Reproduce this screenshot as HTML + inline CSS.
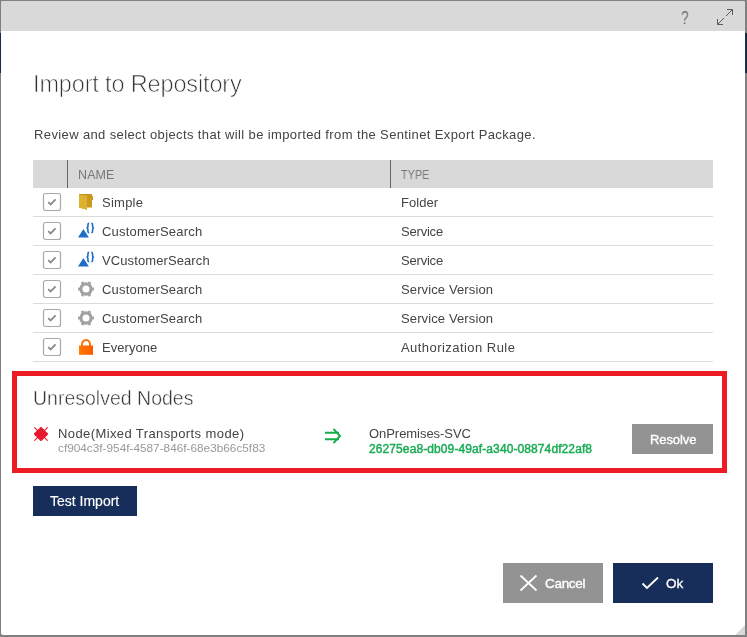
<!DOCTYPE html>
<html><head><meta charset="utf-8">
<style>
html,body{margin:0;padding:0;}
body{width:747px;height:637px;background:#808080;position:relative;overflow:hidden;font-family:"Liberation Sans",sans-serif;color:#444;}
.abs{position:absolute;}
#dlg{position:absolute;left:1px;top:1px;width:744px;height:634px;background:#fff;border-radius:2px;overflow:hidden;}
#hdr{position:absolute;left:0;top:0;width:744px;height:30px;background:#d9d9d9;}
.t{position:absolute;white-space:nowrap;line-height:1;will-change:transform;}
.btn{position:absolute;}
</style></head><body>
<div class="abs" style="left:0;top:33px;width:1px;height:40px;background:#1b2a44"></div>
<div class="abs" style="left:745px;top:33px;width:2px;height:40px;background:#1b2a44"></div>
<div id="dlg">
  <div id="hdr"></div>
</div>
<!-- header icons -->
<div class="t" style="left:681px;top:9.6px;font-size:17.5px;color:#707070;transform:scaleX(0.8);transform-origin:0 0">?</div>
<svg class="abs" style="left:715px;top:7px" width="20" height="20" viewBox="0 0 20 20">
  <g stroke="#5c5c5c" stroke-width="1" fill="none">
    <path d="M2.5 17.5 L9 11 M11 9 L17.5 2.5"/>
    <path d="M12 2.5 H17.5 V8"/>
    <path d="M2.5 12 V17.5 H8"/>
  </g>
</svg>

<div class="t" style="left:33px;top:72.5px;font-size:23.5px;letter-spacing:-0.15px;color:#333;-webkit-text-stroke:0.7px #fff">Import to Repository</div>
<div class="t" style="left:34px;top:127.8px;font-size:13px;letter-spacing:0.38px;color:#444">Review and select objects that will be imported from the Sentinet Export Package.</div>

<!-- table header -->
<div class="abs" style="left:33px;top:160px;width:680px;height:28px;background:#d9d9d9"></div>
<div class="abs" style="left:67px;top:160px;width:1px;height:28px;background:#666"></div>
<div class="abs" style="left:390px;top:160px;width:1px;height:28px;background:#666"></div>
<div class="t" style="left:77.8px;top:169px;font-size:12.5px;letter-spacing:0.1px;color:#777">NAME</div>
<div class="t" style="left:401px;top:169px;font-size:12.5px;letter-spacing:0.1px;color:#777;transform:scaleX(0.86);transform-origin:0 0">TYPE</div>

<div class="abs" style="left:33px;top:216px;width:680px;height:1px;background:#dcdcdc"></div>
<svg class="abs" style="left:42px;top:192px" width="20" height="20" viewBox="0 0 20 20">
<rect x="1.5" y="1.5" width="17" height="17" rx="2" ry="2" fill="#fff" stroke="#a8a8a8" stroke-width="1.2"/>
<path d="M6.2 10.2 L8.6 12.5 L13.6 7.4" stroke="#8a8a8a" stroke-width="1.8" fill="none"/>
</svg>
<svg class="abs" style="left:78px;top:193px" width="16" height="17" viewBox="0 0 16 17">
<path d="M1 1 H14 V3 H15 V7 H14 V14.6 H9 V16.8 L1 14.6 Z" fill="#c99a1e"/>
<path d="M1 1.2 L9 3 V16.8 L1 14.6 Z" fill="#dcb22e"/>
<path d="M1 1 H14 V1.8 H1 Z" fill="#c08a14" opacity="0.6"/>
</svg>
<div class="t" style="left:102px;top:196px;font-size:13px;letter-spacing:0.25px">Simple</div>
<div class="t" style="left:401px;top:196px;font-size:13px;letter-spacing:0.05px">Folder</div>
<div class="abs" style="left:33px;top:245px;width:680px;height:1px;background:#dcdcdc"></div>
<svg class="abs" style="left:42px;top:221px" width="20" height="20" viewBox="0 0 20 20">
<rect x="1.5" y="1.5" width="17" height="17" rx="2" ry="2" fill="#fff" stroke="#a8a8a8" stroke-width="1.2"/>
<path d="M6.2 10.2 L8.6 12.5 L13.6 7.4" stroke="#8a8a8a" stroke-width="1.8" fill="none"/>
</svg>
<svg class="abs" style="left:77px;top:222px" width="18" height="17" viewBox="0 0 18 17">
<path d="M1 15.6 L6.4 7 L11.9 15.6 Z" fill="#1e6ec8"/>
<path d="M12.2 1.4 C11.2 1.4 10.9 1.9 10.9 2.8 V4.9 C10.9 5.6 10.5 6 9.4 6 C10.5 6 10.9 6.4 10.9 7.1 V9.3 C10.9 10.2 11.2 10.7 12.2 10.7" stroke="#1e6ec8" stroke-width="1.6" fill="none"/>
<path d="M14.3 1.4 C15.3 1.4 15.6 1.9 15.6 2.8 V4.9 C15.6 5.6 16 6 17.1 6 C16 6 15.6 6.4 15.6 7.1 V9.3 C15.6 10.2 15.3 10.7 14.3 10.7" stroke="#1e6ec8" stroke-width="1.6" fill="none"/>
</svg>
<div class="t" style="left:102px;top:225px;font-size:13px;letter-spacing:0.2px">CustomerSearch</div>
<div class="t" style="left:401px;top:225px;font-size:13px;letter-spacing:-0.2px">Service</div>
<div class="abs" style="left:33px;top:274px;width:680px;height:1px;background:#dcdcdc"></div>
<svg class="abs" style="left:42px;top:250px" width="20" height="20" viewBox="0 0 20 20">
<rect x="1.5" y="1.5" width="17" height="17" rx="2" ry="2" fill="#fff" stroke="#a8a8a8" stroke-width="1.2"/>
<path d="M6.2 10.2 L8.6 12.5 L13.6 7.4" stroke="#8a8a8a" stroke-width="1.8" fill="none"/>
</svg>
<svg class="abs" style="left:77px;top:251px" width="18" height="17" viewBox="0 0 18 17">
<path d="M1 15.6 L6.4 7 L11.9 15.6 Z" fill="#1e6ec8"/>
<path d="M12.2 1.4 C11.2 1.4 10.9 1.9 10.9 2.8 V4.9 C10.9 5.6 10.5 6 9.4 6 C10.5 6 10.9 6.4 10.9 7.1 V9.3 C10.9 10.2 11.2 10.7 12.2 10.7" stroke="#1e6ec8" stroke-width="1.6" fill="none"/>
<path d="M14.3 1.4 C15.3 1.4 15.6 1.9 15.6 2.8 V4.9 C15.6 5.6 16 6 17.1 6 C16 6 15.6 6.4 15.6 7.1 V9.3 C15.6 10.2 15.3 10.7 14.3 10.7" stroke="#1e6ec8" stroke-width="1.6" fill="none"/>
</svg>
<div class="t" style="left:102px;top:254px;font-size:13px;letter-spacing:0.1px">VCustomerSearch</div>
<div class="t" style="left:401px;top:254px;font-size:13px;letter-spacing:-0.2px">Service</div>
<div class="abs" style="left:33px;top:303px;width:680px;height:1px;background:#dcdcdc"></div>
<svg class="abs" style="left:42px;top:279px" width="20" height="20" viewBox="0 0 20 20">
<rect x="1.5" y="1.5" width="17" height="17" rx="2" ry="2" fill="#fff" stroke="#a8a8a8" stroke-width="1.2"/>
<path d="M6.2 10.2 L8.6 12.5 L13.6 7.4" stroke="#8a8a8a" stroke-width="1.8" fill="none"/>
</svg>
<svg class="abs" style="left:78px;top:281px" width="16" height="16" viewBox="0 0 16 16">
<g fill="#a2a2a2">
<path fill-rule="evenodd" d="M8 1.3 A6.7 6.7 0 1 1 8 14.7 A6.7 6.7 0 1 1 8 1.3 Z M8 4.5 A3.5 3.5 0 1 0 8 11.5 A3.5 3.5 0 1 0 8 4.5 Z"/>
<rect x="0" y="6.6" width="3.2" height="2.8"/>
<rect x="12.8" y="6.6" width="3.2" height="2.8"/>
<rect x="0" y="6.6" width="3.2" height="2.8" transform="rotate(60 8 8)"/>
<rect x="12.8" y="6.6" width="3.2" height="2.8" transform="rotate(60 8 8)"/>
<rect x="0" y="6.6" width="3.2" height="2.8" transform="rotate(120 8 8)"/>
<rect x="12.8" y="6.6" width="3.2" height="2.8" transform="rotate(120 8 8)"/>
</g>
</svg>
<div class="t" style="left:102px;top:283px;font-size:13px;letter-spacing:0.2px">CustomerSearch</div>
<div class="t" style="left:401px;top:283px;font-size:13px;letter-spacing:0.12px">Service Version</div>
<div class="abs" style="left:33px;top:332px;width:680px;height:1px;background:#dcdcdc"></div>
<svg class="abs" style="left:42px;top:308px" width="20" height="20" viewBox="0 0 20 20">
<rect x="1.5" y="1.5" width="17" height="17" rx="2" ry="2" fill="#fff" stroke="#a8a8a8" stroke-width="1.2"/>
<path d="M6.2 10.2 L8.6 12.5 L13.6 7.4" stroke="#8a8a8a" stroke-width="1.8" fill="none"/>
</svg>
<svg class="abs" style="left:78px;top:310px" width="16" height="16" viewBox="0 0 16 16">
<g fill="#a2a2a2">
<path fill-rule="evenodd" d="M8 1.3 A6.7 6.7 0 1 1 8 14.7 A6.7 6.7 0 1 1 8 1.3 Z M8 4.5 A3.5 3.5 0 1 0 8 11.5 A3.5 3.5 0 1 0 8 4.5 Z"/>
<rect x="0" y="6.6" width="3.2" height="2.8"/>
<rect x="12.8" y="6.6" width="3.2" height="2.8"/>
<rect x="0" y="6.6" width="3.2" height="2.8" transform="rotate(60 8 8)"/>
<rect x="12.8" y="6.6" width="3.2" height="2.8" transform="rotate(60 8 8)"/>
<rect x="0" y="6.6" width="3.2" height="2.8" transform="rotate(120 8 8)"/>
<rect x="12.8" y="6.6" width="3.2" height="2.8" transform="rotate(120 8 8)"/>
</g>
</svg>
<div class="t" style="left:102px;top:312px;font-size:13px;letter-spacing:0.2px">CustomerSearch</div>
<div class="t" style="left:401px;top:312px;font-size:13px;letter-spacing:0.12px">Service Version</div>
<div class="abs" style="left:33px;top:361px;width:680px;height:1px;background:#dcdcdc"></div>
<svg class="abs" style="left:42px;top:337px" width="20" height="20" viewBox="0 0 20 20">
<rect x="1.5" y="1.5" width="17" height="17" rx="2" ry="2" fill="#fff" stroke="#a8a8a8" stroke-width="1.2"/>
<path d="M6.2 10.2 L8.6 12.5 L13.6 7.4" stroke="#8a8a8a" stroke-width="1.8" fill="none"/>
</svg>
<svg class="abs" style="left:78px;top:339px" width="16" height="17" viewBox="0 0 16 17">
<defs><linearGradient id="lg" x1="0" x2="1" y1="0" y2="0"><stop offset="0" stop-color="#ff7a00"/><stop offset="1" stop-color="#ff5a00"/></linearGradient></defs>
<path d="M4 7 V5.3 A4 4.3 0 0 1 12 5.3 V7" stroke="#ff6e00" stroke-width="1.9" fill="none"/>
<rect x="1" y="6.5" width="14" height="9.3" fill="url(#lg)"/>
</svg>
<div class="t" style="left:102px;top:341px;font-size:13px;letter-spacing:0.05px">Everyone</div>
<div class="t" style="left:401px;top:341px;font-size:13px;letter-spacing:0.45px">Authorization Rule</div>

<!-- unresolved box -->
<div class="abs" style="left:12px;top:371px;width:705px;height:92px;border:5px solid #ed1c24"></div>
<div class="t" style="left:33px;top:388.8px;font-size:19.5px;color:#333;-webkit-text-stroke:0.45px #fff">Unresolved Nodes</div>
<svg class="abs" style="left:33px;top:426px" width="16" height="16" viewBox="0 0 16 16" overflow="hidden"><clipPath id="cp"><rect x="1" y="1" width="14" height="14"/></clipPath><g clip-path="url(#cp)">
  <path d="M1.3 1.3 L14.7 14.7 M14.7 1.3 L1.3 14.7" stroke="#e8192c" stroke-width="1.1"/>
  <path d="M8 0.6 L15.4 8 L8 15.4 L0.6 8 Z" fill="#e8192c"/></g>
</svg>
<div class="t" style="left:58px;top:426.7px;font-size:13px;letter-spacing:0.4px;color:#444">Node(Mixed Transports mode)</div>
<div class="t" style="left:58px;top:442.7px;font-size:11.8px;color:#999">cf904c3f-954f-4587-846f-68e3b66c5f83</div>
<svg class="abs" style="left:324px;top:428px" width="18" height="16" viewBox="0 0 18 16">
  <path d="M1 4.8 H15 M1 11.3 H15 M9.5 0.8 L16 8 L9.5 15.2" stroke="#1aab4b" stroke-width="2" fill="none"/>
</svg>
<div class="t" style="left:369px;top:426.7px;font-size:13px;letter-spacing:-0.05px;color:#444">OnPremises-SVC</div>
<div class="t" style="left:369px;top:442.5px;font-size:12px;letter-spacing:0.1px;-webkit-text-stroke:0.45px #1aab55;color:#1aab55">26275ea8-db09-49af-a340-08874df22af8</div>
<div class="btn" style="left:632px;top:424px;width:81px;height:30px;background:#939393"></div>
<div class="t" style="left:649.5px;top:432.8px;font-size:13px;letter-spacing:-0.1px;-webkit-text-stroke:0.35px #fff;color:#fff">Resolve</div>

<!-- test import -->
<div class="btn" style="left:33px;top:486px;width:104px;height:30px;background:#172e5a"></div>
<div class="t" style="left:50px;top:494.1px;font-size:14px;-webkit-text-stroke:0.15px #fff;color:#fff">Test Import</div>

<!-- cancel / ok -->
<div class="btn" style="left:503px;top:563px;width:100px;height:40px;background:#939393"></div>
<svg class="abs" style="left:519px;top:574px" width="19" height="18" viewBox="0 0 19 18">
  <path d="M1.5 1.5 L17.5 16.5 M17.5 1.5 L1.5 16.5" stroke="#fff" stroke-width="1.8"/>
</svg>
<div class="t" style="left:544.5px;top:576.6px;font-size:13.5px;letter-spacing:-0.3px;-webkit-text-stroke:0.35px #fff;color:#fff">Cancel</div>
<div class="btn" style="left:613px;top:563px;width:100px;height:40px;background:#172e5a"></div>
<svg class="abs" style="left:641px;top:576px" width="19" height="14" viewBox="0 0 19 14">
  <path d="M1.5 7.5 L6 12 L17 1.5" stroke="#fff" stroke-width="1.8" fill="none"/>
</svg>
<div class="t" style="left:666px;top:576.6px;font-size:13.5px;-webkit-text-stroke:0.3px #fff;color:#fff">Ok</div>

<!-- resize grip -->
<svg class="abs" style="left:735px;top:625px" width="10" height="10" viewBox="0 0 10 10">
  <path d="M10 0 L10 10 L0 10 Z" fill="#d9d9d9"/>
</svg>
</body></html>
